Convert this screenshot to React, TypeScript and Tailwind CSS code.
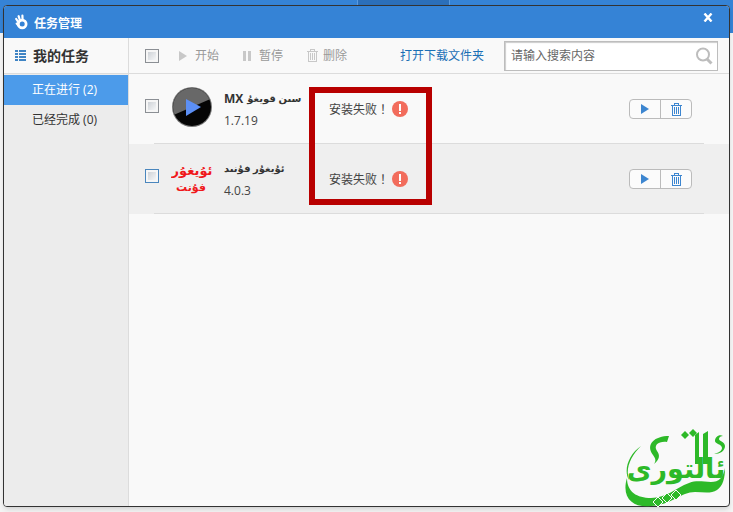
import { useState } from "react";

const LATIN_CJK = "font-['Open_Sans','Noto_Sans_CJK_SC',sans-serif]";
const UYGHUR = "font-['Open_Sans','DejaVu_Sans',sans-serif]";

interface Task {
  id: string;
  prefix?: string;
  name: string;
  version: string;
}

const TASKS: Task[] = [
  { id: "mx", prefix: "MX", name: "سىن قويغۇ", version: "1.7.19" },
  { id: "font", name: "ئۇيغۇر فۇنىد", version: "4.0.3" },
];

function HandIcon() {
  return (
    <svg width="14" height="16" viewBox="0 0 14 16" fill="none" stroke="#fff" strokeLinecap="round">
      <circle cx="8.2" cy="10" r="3.9" strokeWidth="2.8" />
      <path d="M4.6 8.5 2.2 5" strokeWidth="2.2" />
      <path d="M6 6.5 4.6 2.2" strokeWidth="2.2" />
      <path d="M8.6 6 8.4 1.6" strokeWidth="2.2" />
      <path d="M4.8 12 2.6 9.6" strokeWidth="2" />
    </svg>
  );
}

function ListIcon() {
  return (
    <svg width="11" height="11" viewBox="0 0 11 11" fill="#3f84c4" shapeRendering="crispEdges">
      {[0, 3, 6, 9].map((y) => (
        <g key={y}>
          <rect x="0" y={y} width="3" height="2" />
          <rect x="4" y={y} width="7" height="2" />
        </g>
      ))}
    </svg>
  );
}

function PlayIcon() {
  return (
    <svg width="8" height="10" viewBox="0 0 8 10" fill="currentColor">
      <path d="M0 0 8 5 0 10z" />
    </svg>
  );
}

function PauseIcon() {
  return (
    <svg width="8" height="10" viewBox="0 0 8 10" fill="currentColor">
      <path d="M0 0h3v10H0zM5 0h3v10H5z" />
    </svg>
  );
}

function TrashIcon() {
  return (
    <svg width="11" height="13" viewBox="0 0 11 13" fill="none" stroke="currentColor" shapeRendering="crispEdges">
      <path d="M0 2.5h11M3.5 2V.5h4V2M1.5 3v9.5h8V3M3.5 4v7M5.5 4v7M7.5 4v7" />
    </svg>
  );
}

function SearchIcon() {
  return (
    <svg width="18" height="18" viewBox="0 0 18 18" fill="none" stroke="#bdbdbd">
      <circle cx="8" cy="7.5" r="6" strokeWidth="2" />
      <path d="m12 12 4.5 4.5" strokeWidth="3" />
    </svg>
  );
}

function AlertIcon() {
  return (
    <svg width="16" height="16" viewBox="0 0 16 16">
      <circle cx="8" cy="8" r="8" fill="#f26c5c" />
      <path d="M7 3h2v7H7zM7 11h2v2H7z" fill="#fff" />
    </svg>
  );
}

function PlayerLogo() {
  return (
    <svg width="42" height="42" viewBox="0 0 42 42">
      <clipPath id="disc">
        <circle cx="21" cy="21" r="19" />
      </clipPath>
      <circle cx="21" cy="21" r="20" fill="#777" />
      <g clipPath="url(#disc)">
        <path d="M0 0h42v42H0z" fill="#050505" />
        <path d="M0 0h42v12L0 30z" fill="#686868" />
      </g>
      <path d="M15 13 30 21 15 30z" fill="#5c8ff5" />
    </svg>
  );
}

function FontLogo() {
  return (
    <svg width="42" height="42" viewBox="0 0 42 42" fill="#f0181c" className="font-['DejaVu_Sans',sans-serif] font-bold">
      <text x="21" y="19" fontSize="13" textAnchor="middle">ئۇيغۇر</text>
      <text x="20" y="35" fontSize="11" textAnchor="middle">فۇنت</text>
    </svg>
  );
}

function SiteLogo() {
  return (
    <svg width="104" height="80" viewBox="0 0 104 80" fill="#2db928" className="font-['DejaVu_Sans',sans-serif] font-bold">
      <text x="51" y="50" fontSize="27" textAnchor="middle">ئالتورى</text>
      {/* flourishes */}
      <path d="M16 18C4 26-2 42 4 52 0 40 6 28 16 18z" />
      <path d="M44 8C30 8 20 16 28 27c3 4 3 6 1 9 6-5 6-9 3-13-4-6 2-10 10-9z" />
      <path d="m70 7 4-3v32h-4zM78 6l5-3v33h-5z" />
      <path d="M98 8c-4-2-8 1-8 5 0 3 7 3 7 7 0 3-4 5-8 6 6 0 11-3 11-8 0-4-6-5-6-7 0-2 2-3 4-3z" />
      <path d="m60 3 4 4-4 4-4-4zM68 1l4 4-4 4-4-4z" />
      <path d="M2 50C-4 70 8 80 26 78 46 77 56 64 70 64c8 0 16 2 22-2 6-4 8-12 8-22-2 10-6 14-14 14-8 0-14-2-22 1C50 60 42 70 26 70 12 70 2 64 2 50z" />
      <path d="m33 69 5 5-5 5-5-5zM42 65l5 5-5 5-5-5zM51 62l5 5-5 5-5-5z" stroke="#fafafa" />
    </svg>
  );
}

interface TickProps {
  label: string;
  blue?: boolean;
}

function Tick({ label, blue }: TickProps) {
  return (
    <input
      type="checkbox"
      aria-label={label}
      className={`size-3.5 shrink-0 appearance-none border bg-linear-to-br from-[#c4c9cf] to-white shadow-[inset_0_0_0_2px_#f6f6f6] checked:bg-[#4c9bea] ${
        blue ? "border-[#4a86bd]" : "border-[#8b8f94]"
      }`}
    />
  );
}

function TaskRow({ task, second }: { task: Task; second: boolean }) {
  return (
    <li className={`relative flex h-[70px] items-center pl-4 pr-[37px] ${second ? "bg-[#efefef]" : ""}`}>
      <div className="flex pb-1.5">
        <Tick label={task.name} blue={second} />
      </div>
      <div className="ml-3 shrink-0 pb-1">{second ? <FontLogo /> : <PlayerLogo />}</div>
      <div className="ml-[11px] w-[105px] shrink-0 pt-1">
        <div className={`flex h-5 items-center gap-1 whitespace-nowrap font-bold text-[#333] ${UYGHUR}`}>
          {task.prefix && <span>{task.prefix}</span>}
          <span dir="rtl" className="text-[10px]">{task.name}</span>
        </div>
        <div className="leading-6">{task.version}</div>
      </div>
      <div className="flex flex-1 items-center gap-[3px] whitespace-nowrap">
        <span className="font-['Noto_Sans_CJK_TC',sans-serif]">安装失败！</span>
        <AlertIcon />
      </div>
      <div className="flex h-5 w-[63px] shrink-0 divide-x divide-[#bbb] rounded-sm border border-[#bbb] bg-[#fbfbfb] text-[#3d86d0]">
        <button aria-label="开始" className="flex flex-1 items-center justify-center"><PlayIcon /></button>
        <button aria-label="删除" className="flex flex-1 items-center justify-center"><TrashIcon /></button>
      </div>
      <div className="absolute bottom-0 left-[25px] right-[25px] h-px bg-[#dcdcdc]" />
    </li>
  );
}

export default function App() {
  const [tab, setTab] = useState<"running" | "done">("running");
  const [query, setQuery] = useState("");

  const tabClass = (active: boolean) =>
    `block h-[30px] w-full pl-7 text-left ${active ? "bg-[#4c9bea] text-white" : "text-[#333]"}`;

  return (
    <div className={`relative flex min-h-screen flex-col bg-[#f5f5f5] px-[3px] py-[5px] text-xs text-[#444] ${LATIN_CJK}`}>
      {/* page behind the window */}
      <div className="absolute inset-x-0 top-0 flex h-[33px] justify-center bg-[#3583d6]">
        <div className="ml-[74px] h-full w-[93px] border-x border-[#5b9be0] bg-[#2b6fba]" />
      </div>

      <div className="relative flex flex-1 flex-col overflow-hidden rounded-sm border border-[#333] bg-[#f9f9f9] shadow-md">
        <header className="flex h-8 items-center bg-[#3583d6] pl-2.5 pr-4 text-white">
          <HandIcon />
          <h1 className="ml-1.5 flex-1 pt-1 font-bold">任务管理</h1>
          <button aria-label="关闭" className="-mt-2.5">
            <svg width="10" height="9" viewBox="0 0 10 9" stroke="#fff" strokeWidth="2.4">
              <path d="m1.5.5 7 8M8.5.5l-7 8" />
            </svg>
          </button>
        </header>

        <div className="flex flex-1">
          <aside className="w-[125px] shrink-0 border-r border-[#dcdcdc] bg-[#ececec]">
            <div className="mb-px flex h-9 items-center border-b border-[#dcdcdc] bg-[#f9f9f9] pl-[11px]">
              <ListIcon />
              <h2 className="ml-[7px] text-sm font-bold text-[#333]">我的任务</h2>
            </div>
            <nav>
              <button className={tabClass(tab === "running")} onClick={() => setTab("running")}>正在进行 (2)</button>
              <button className={tabClass(tab === "done")} onClick={() => setTab("done")}>已经完成 (0)</button>
            </nav>
          </aside>

          <main className="min-w-0 flex-1">
            <div className="flex h-9 items-center border-b border-[#dcdcdc] pl-4 pr-[11px] text-[#999]">
              <Tick label="全选" />
              <button className="ml-5 flex items-center gap-2"><span className="text-[#c8c8c8]"><PlayIcon /></span>开始</button>
              <button className="ml-6 flex items-center gap-2"><span className="text-[#c8c8c8]"><PauseIcon /></span>暂停</button>
              <button className="ml-6 flex items-center gap-[5px]"><span className="text-[#c8c8c8]"><TrashIcon /></span>删除</button>
              <a href="#folder" className="ml-auto text-[#1a6fb5]">打开下载文件夹</a>
              <label className="ml-5 flex h-[30px] w-[214px] items-center border border-[#bdbdbd] bg-white px-1 shadow-[inset_1px_1px_1px_#ccc]">
                <input
                  type="text"
                  aria-label="搜索"
                  value={query}
                  onChange={(e) => setQuery(e.target.value)}
                  placeholder="请输入搜索内容"
                  className="min-w-0 flex-1 pl-0.5 outline-none placeholder:text-[#666]"
                />
                <SearchIcon />
              </label>
            </div>
            {tab === "running" && (
              <ul>
                {TASKS.map((task, i) => (
                  <TaskRow key={task.id} task={task} second={i === 1} />
                ))}
              </ul>
            )}
          </main>
        </div>
      </div>

      {/* highlight around the failed installs */}
      <div className="pointer-events-none absolute left-[309px] top-[87px] h-[118px] w-[123px] border-6 border-[#b80000]" />
      <div className="absolute bottom-1 right-1">
        <SiteLogo />
      </div>
    </div>
  );
}
